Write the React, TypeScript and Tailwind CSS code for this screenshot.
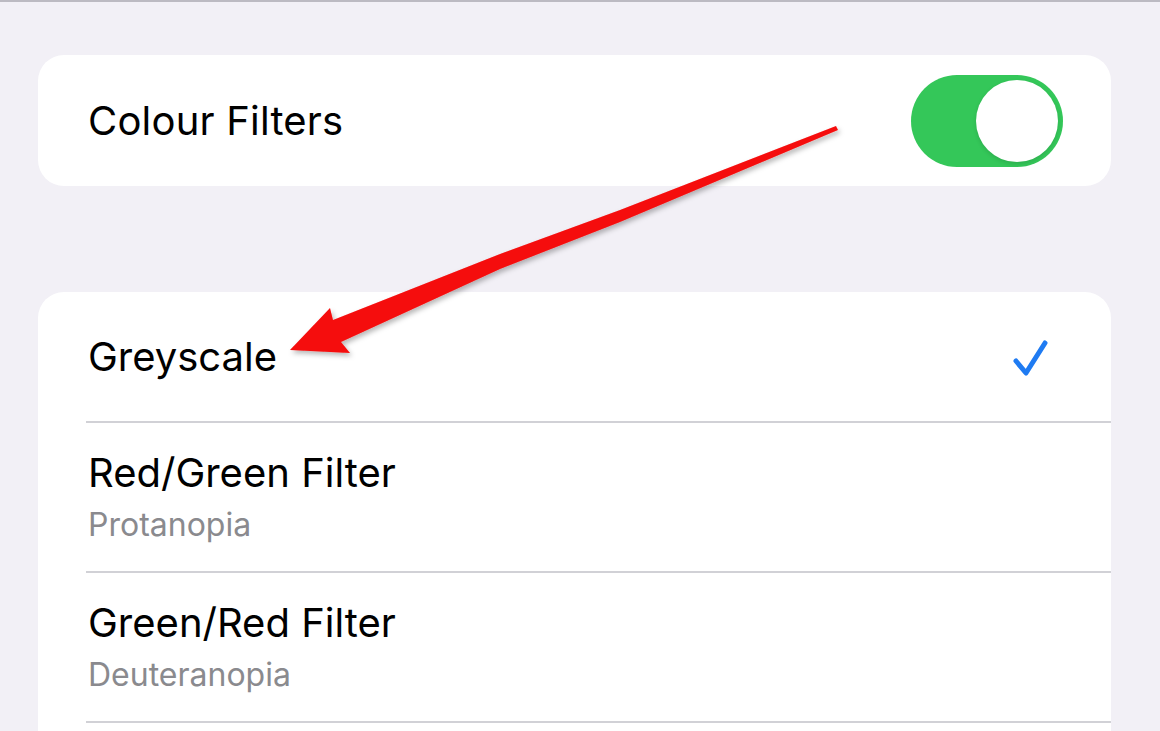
import React from 'react';

const font = { fontFamily: 'Inter, "Noto Sans", sans-serif' };

type Row = { title: string; subtitle?: string; checked?: boolean };

const rows: Row[] = [
  { title: 'Greyscale', checked: true },
  { title: 'Red/Green Filter', subtitle: 'Protanopia' },
  { title: 'Green/Red Filter', subtitle: 'Deuteranopia' },
];

const Toggle: React.FC = () => (
  <div className="w-[152px] h-[92px] rounded-full bg-[#34c759] flex items-center justify-end pr-[5px]">
    <div className="w-[82px] h-[82px] rounded-full bg-white shadow-[0_2px_4px_rgba(0,0,0,0.12)]" />
  </div>
);

const Check: React.FC = () => (
  <svg width="44" height="44" viewBox="0 0 44 44" className="mr-[58px]">
    <path d="M7 26 L17 38 L36 8" fill="none" stroke="#1f7bf2" strokeWidth="5" strokeLinecap="round" strokeLinejoin="round" />
  </svg>
);

// red annotation arrow laid over the screenshot
const Arrow: React.FC = () => (
  <svg className="absolute left-0 top-0 pointer-events-none" width="1160" height="731" viewBox="0 0 1160 731">
    <defs>
      <filter id="sh" x="-10%" y="-10%" width="120%" height="120%">
        <feDropShadow dx="2" dy="3" stdDeviation="2.5" floodColor="#000" floodOpacity="0.28" />
      </filter>
    </defs>
    <polygon
      filter="url(#sh)"
      fill="#f50a0a"
      points="290,348 330,306 333,318 500,252 620,208 836,124 838,128 620,220 500,267 341,340 350,351"
    />
  </svg>
);

export default function App() {
  return (
    <div className="relative w-[1160px] h-[731px] overflow-hidden bg-[#f2f0f6] border-t-2 border-[#bcbac2]" style={font}>
      <div className="pt-[53px] pl-[38px]">
        <div className="w-[1073px] h-[131px] bg-white rounded-[26px] flex items-center justify-between pl-[50px] pr-[48px]">
          <span className="text-[40px] text-black tracking-[0.2px]">Colour Filters</span>
          <Toggle />
        </div>

        <div className="mt-[106px] w-[1073px] h-[460px] bg-white rounded-t-[26px]">
          {rows.map((r, i) => (
            <div key={i} className="pl-[48px]">
              <div
                className={`flex items-center justify-between border-b-2 border-[#d1d1d6] ${
                  r.subtitle ? 'h-[150px]' : 'h-[131px]'
                }`}
              >
                <div className="flex flex-col pl-[2px]">
                  <span className="text-[40px] leading-[48px] text-black">{r.title}</span>
                  {r.subtitle && (
                    <span className="text-[32px] leading-[40px] text-[#8a8a8e] mt-[8px]">{r.subtitle}</span>
                  )}
                </div>
                {r.checked && <Check />}
              </div>
            </div>
          ))}
        </div>
      </div>
      <Arrow />
    </div>
  );
}
